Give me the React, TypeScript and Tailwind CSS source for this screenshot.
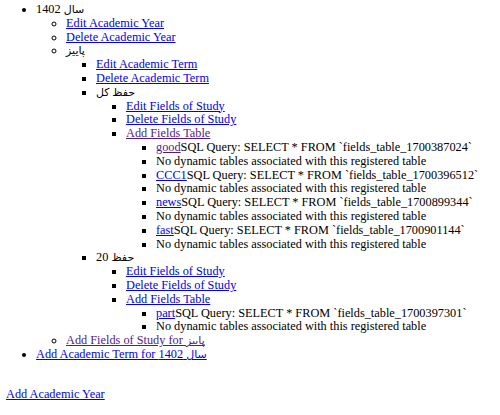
import React from 'react';

const BLUE = 'text-[#0000ee] underline';
const VISITED = 'text-[#551a8b] underline';

type Table = { name: string; query: string; visited?: boolean };

// Persian words come out of DejaVu Sans, which runs large; shrink them a bit
function Fa({ children }: { children: React.ReactNode }) {
  return <span className="text-[11px]">{children}</span>;
}

function TableList({ tables }: { tables: Table[] }) {
  return (
    <ul className="list-[square] pl-[30px]">
      {tables.map((t) => (
        <React.Fragment key={t.name}>
          <li>
            <a href="#" className={t.visited ? VISITED : BLUE}>{t.name}</a>
            SQL Query: SELECT * FROM `{t.query}`
          </li>
          <li>No dynamic tables associated with this registered table</li>
        </React.Fragment>
      ))}
    </ul>
  );
}

function FieldOfStudy({ title, tables, addVisited }: { title: React.ReactNode; tables: Table[]; addVisited?: boolean }) {
  return (
    <li>
      {title}
      <ul className="list-[square] pl-[30px]">
        <li><a href="#" className={BLUE}>Edit Fields of Study</a></li>
        <li><a href="#" className={BLUE}>Delete Fields of Study</a></li>
        <li>
          <a href="#" className={addVisited ? VISITED : BLUE}>Add Fields Table</a>
          <TableList tables={tables} />
        </li>
      </ul>
    </li>
  );
}

export default function App() {
  return (
    <div
      className="bg-white text-black text-[12.3px] leading-[13.8px] px-[6px] pt-[3px] min-h-[415px]"
      style={{ fontFamily: '"Liberation Serif", "DejaVu Sans", serif' }}
    >
      <ul className="list-disc pl-[30px]">
        <li>
          <Fa>سال</Fa> 1402
          <ul className="list-[circle] pl-[30px]">
            <li><a href="#" className={BLUE}>Edit Academic Year</a></li>
            <li><a href="#" className={BLUE}>Delete Academic Year</a></li>
            <li>
              <Fa>پاییز</Fa>
              <ul className="list-[square] pl-[30px]">
                <li><a href="#" className={BLUE}>Edit Academic Term</a></li>
                <li><a href="#" className={BLUE}>Delete Academic Term</a></li>
                <FieldOfStudy
                  title={<Fa>حفظ کل</Fa>}
                  addVisited
                  tables={[
                    { name: 'good', query: 'fields_table_1700387024', visited: true },
                    { name: 'CCC1', query: 'fields_table_1700396512' },
                    { name: 'news', query: 'fields_table_1700899344' },
                    { name: 'fast', query: 'fields_table_1700901144' },
                  ]}
                />
                <FieldOfStudy
                  title={<><Fa>حفظ</Fa> 20</>}
                  tables={[{ name: 'part', query: 'fields_table_1700397301' }]}
                />
              </ul>
            </li>
            <li><a href="#" className={VISITED}>Add Fields of Study for <Fa>پاییز</Fa></a></li>
          </ul>
        </li>
        <li><a href="#" className={BLUE}>Add Academic Term for <Fa>سال</Fa> 1402</a></li>
      </ul>
      <div className="mt-[26px]">
        <a href="#" className={BLUE}>Add Academic Year</a>
      </div>
    </div>
  );
}
